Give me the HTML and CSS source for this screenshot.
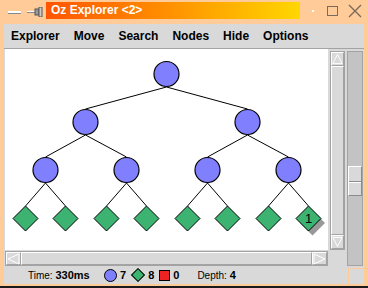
FILE: index.html
```html
<!DOCTYPE html>
<html lang="en">
<head>
    <meta charset="UTF-8">
    <title>Oz Explorer &lt;2&gt;</title>
    <link rel="stylesheet" href="styles.css">
</head>
<body>
    <div class="window">
        <div class="titlebar">
            <div class="tb-left">
                <svg class="tb-min" width="14" height="4" viewBox="0 0 14 4"><rect x="0" y="1" width="13" height="2" fill="#fff"/><rect x="0" y="3" width="13" height="1" fill="#888"/></svg>
                <svg class="tb-pin" width="16" height="10" viewBox="0 0 16 10">
                    <rect x="0" y="4" width="8" height="2" fill="#888"/>
                    <rect x="0" y="4" width="8" height="1" fill="#fff"/>
                    <rect x="8" y="2" width="4" height="6" fill="#999" stroke="#555" stroke-width="1"/>
                    <rect x="12" y="0" width="3" height="10" fill="#ccc" stroke="#555" stroke-width="1"/>
                </svg>
            </div>
            <div class="title">Oz Explorer &lt;2&gt;</div>
            <div class="tb-right">
                <span class="tb-dot"></span>
                <span class="tb-max"></span>
                <svg class="tb-close" width="14" height="14" viewBox="0 0 14 14"><path d="M1 1 L13 13 M13 1 L1 13" stroke="#7a6a5a" stroke-width="1.4"/></svg>
            </div>
        </div>
        <div class="client">
            <div class="menubar">
                <span class="menu-item">Explorer</span>
                <span class="menu-item">Move</span>
                <span class="menu-item">Search</span>
                <span class="menu-item">Nodes</span>
                <span class="menu-item">Hide</span>
                <span class="menu-item">Options</span>
            </div>
            <div class="workspace">
                <div class="view">
                    <div class="canvas">
                        <svg width="323" height="201" viewBox="0 0 323 201">
                            <g stroke="#000" stroke-width="1">
                                <line x1="161.5" y1="38" x2="80.5" y2="60"/>
                                <line x1="161.5" y1="38" x2="242.5" y2="60"/>
                                <line x1="80.5" y1="86" x2="40.5" y2="108"/>
                                <line x1="80.5" y1="86" x2="121.5" y2="108"/>
                                <line x1="242.5" y1="86" x2="202.5" y2="108"/>
                                <line x1="242.5" y1="86" x2="283.5" y2="108"/>
                                <line x1="40.5" y1="134" x2="20.5" y2="157"/>
                                <line x1="40.5" y1="134" x2="60.5" y2="157"/>
                                <line x1="121.5" y1="134" x2="101.5" y2="157"/>
                                <line x1="121.5" y1="134" x2="141.5" y2="157"/>
                                <line x1="202.5" y1="134" x2="182.5" y2="157"/>
                                <line x1="202.5" y1="134" x2="222.5" y2="157"/>
                                <line x1="283.5" y1="134" x2="263.5" y2="157"/>
                                <line x1="283.5" y1="134" x2="303.5" y2="157"/>
                            </g>
                            <g fill="#8080ff" stroke="#000" stroke-width="1.2">
                                <circle cx="161.5" cy="25" r="12.5"/>
                                <circle cx="80.5" cy="73" r="12.5"/>
                                <circle cx="242.5" cy="73" r="12.5"/>
                                <circle cx="40.5" cy="121" r="12.5"/>
                                <circle cx="121.5" cy="121" r="12.5"/>
                                <circle cx="202.5" cy="121" r="12.5"/>
                                <circle cx="283.5" cy="121" r="12.5"/>
                            </g>
                            <path d="M307.5 161.5 l12.5 12.5 l-12.5 12.5 l-12.5 -12.5 z" fill="#999"/>
                            <g fill="#3cb371" stroke="#000" stroke-width="1">
                                <path d="M20.5 157 l12.5 12.5 l-12.5 12.5 l-12.5 -12.5 z"/>
                                <path d="M60.5 157 l12.5 12.5 l-12.5 12.5 l-12.5 -12.5 z"/>
                                <path d="M101.5 157 l12.5 12.5 l-12.5 12.5 l-12.5 -12.5 z"/>
                                <path d="M141.5 157 l12.5 12.5 l-12.5 12.5 l-12.5 -12.5 z"/>
                                <path d="M182.5 157 l12.5 12.5 l-12.5 12.5 l-12.5 -12.5 z"/>
                                <path d="M222.5 157 l12.5 12.5 l-12.5 12.5 l-12.5 -12.5 z"/>
                                <path d="M263.5 157 l12.5 12.5 l-12.5 12.5 l-12.5 -12.5 z"/>
                                <path d="M303.5 157 l12.5 12.5 l-12.5 12.5 l-12.5 -12.5 z"/>
                            </g>
                            <text class="node-label" x="303.5" y="174" text-anchor="middle">1</text>
                        </svg>
                    </div>
                    <div class="vscroll">
                        <div class="arrow arrow-up"><svg width="12" height="12" viewBox="0 0 12 12"><path d="M6 1 L11 11 L1 11 Z" fill="#d9d9d9" stroke="#fff"/></svg></div>
                        <div class="trough"></div>
                        <div class="arrow arrow-down"><svg width="12" height="12" viewBox="0 0 12 12"><path d="M1 1 L11 1 L6 11 Z" fill="#d9d9d9" stroke="#fff"/></svg></div>
                    </div>
                    <div class="hscroll">
                        <div class="arrow arrow-left"><svg width="13" height="12" viewBox="0 0 13 12"><path d="M1 6 L12 1 L12 11 Z" fill="#d9d9d9" stroke="#fff"/></svg></div>
                        <div class="trough"></div>
                        <div class="arrow arrow-right"><svg width="13" height="12" viewBox="0 0 13 12"><path d="M12 6 L1 1 L1 11 Z" fill="#d9d9d9" stroke="#fff"/></svg></div>
                    </div>
                    <div class="corner"></div>
                </div>
                <div class="scale">
                    <div class="scale-thumb"></div>
                </div>
            </div>
            <div class="status">
                <span class="stat-time">Time: <b>330ms</b></span>
                <span class="stat-count"><span class="icon-circle"></span><b>7</b></span>
                <span class="stat-count"><span class="icon-diamond"></span><b>8</b></span>
                <span class="stat-count"><span class="icon-square"></span><b>0</b></span>
                <span class="stat-depth">Depth: <b>4</b></span>
            </div>
            <div class="grip"></div>
        </div>
    </div>
</body>
</html>
```

FILE: styles.css
```css
* {
    margin: 0;
    padding: 0;
    box-sizing: border-box;
}

body {
    width: 368px;
    height: 288px;
    overflow: hidden;
    font-family: 'Liberation Sans', Arial, sans-serif;
    background-color: #ffcc99;
}

.window {
    width: 368px;
    height: 288px;
    display: flex;
    flex-direction: column;
    background-color: #ffcc99;
    border-bottom: 2px solid #1a1a1a;
}

.titlebar {
    height: 24px;
    display: flex;
    align-items: center;
}

.tb-left {
    width: 46px;
    display: flex;
    align-items: center;
    padding-left: 8px;
    gap: 5px;
}

.title {
    width: 254px;
    height: 17px;
    margin-top: -3px;
    padding-left: 5px;
    background: linear-gradient(to right, #ff5500, #ff8c00 45%, #ffd700);
    color: #fff;
    font-size: 12px;
    font-weight: bold;
    line-height: 17px;
}

.tb-right {
    flex: 1;
    display: flex;
    align-items: center;
    padding-left: 12px;
    margin-top: -3px;
}

.tb-dot {
    width: 2px;
    height: 2px;
    background-color: #fff;
    margin-right: 13px;
}

.tb-max {
    width: 11px;
    height: 10px;
    border: 1px solid #7a6a5a;
    margin-right: 10px;
}

.client {
    position: relative;
    flex: 1;
    margin: 0 4px 2px 4px;
    background-color: #d9d9d9;
    display: flex;
    flex-direction: column;
}

.menubar {
    height: 25px;
    display: flex;
    align-items: center;
    padding: 0 0 1px 7px;
    gap: 14px;
    border-bottom: 1px solid #a3a3a3;
    font-size: 12px;
    font-weight: bold;
    color: #000;
}

.workspace {
    display: flex;
    padding-left: 1px;
}

.view {
    display: grid;
    grid-template-columns: 323px 15px;
    grid-template-rows: 201px 16px;
    column-gap: 2px;
}

.canvas {
    background-color: #fff;
    overflow: hidden;
}

.canvas svg {
    display: block;
}

.node-label {
    font-family: 'Liberation Sans', Arial, sans-serif;
    font-size: 13px;
    fill: #000;
}

.vscroll {
    margin-top: 2px;
    display: flex;
    flex-direction: column;
    border: 1px solid #a3a3a3;
    background-color: #d9d9d9;
}

.hscroll {
    margin-top: 1px;
    display: flex;
    border: 1px solid #a3a3a3;
    background-color: #d9d9d9;
}

.arrow {
    display: flex;
    align-items: center;
    justify-content: center;
    background-color: #d9d9d9;
    border: 1px solid #fff;
    border-right-color: #a3a3a3;
    border-bottom-color: #a3a3a3;
}

.arrow-up,
.arrow-down {
    height: 14px;
}

.arrow-left,
.arrow-right {
    width: 15px;
}

.trough {
    flex: 1;
    border: 1px solid #fff;
    border-right-color: #a3a3a3;
    border-bottom-color: #a3a3a3;
}

.scale {
    width: 16px;
    height: 215px;
    margin: 2px 0 0 2px;
    border: 1px solid #a3a3a3;
    background-color: #c3c3c3;
    display: flex;
    flex-direction: column;
    padding-top: 114px;
}

.scale-thumb {
    height: 30px;
    border: 1px solid #fff;
    border-right-color: #8c8c8c;
    border-bottom-color: #8c8c8c;
    background: linear-gradient(#d9d9d9 14px, #8c8c8c 14px, #8c8c8c 15px, #fff 15px, #fff 16px, #d9d9d9 16px);
}

.status {
    flex: 1;
    display: flex;
    align-items: center;
    padding-left: 24px;
    font-size: 10px;
    color: #000;
}

.status b {
    font-size: 11px;
}

.stat-time {
    width: 76px;
}

.stat-count {
    display: flex;
    align-items: center;
    margin-right: 5px;
}

.stat-count b {
    margin-left: 3px;
}

.icon-circle {
    width: 13px;
    height: 13px;
    border-radius: 50%;
    background-color: #8080ff;
    border: 1px solid #000;
}

.icon-diamond {
    width: 10px;
    height: 10px;
    margin: 0 2px;
    background-color: #3cb371;
    border: 1px solid #000;
    transform: rotate(45deg);
}

.icon-square {
    width: 11px;
    height: 11px;
    background-color: #ee2222;
    border: 1px solid #000;
}

.stat-depth {
    margin-left: 13px;
}

.grip {
    position: absolute;
    right: 0;
    bottom: 0;
    width: 16px;
    height: 16px;
    border-top: 1px solid #ffcc99;
    border-left: 1px solid #ffcc99;
}
```
